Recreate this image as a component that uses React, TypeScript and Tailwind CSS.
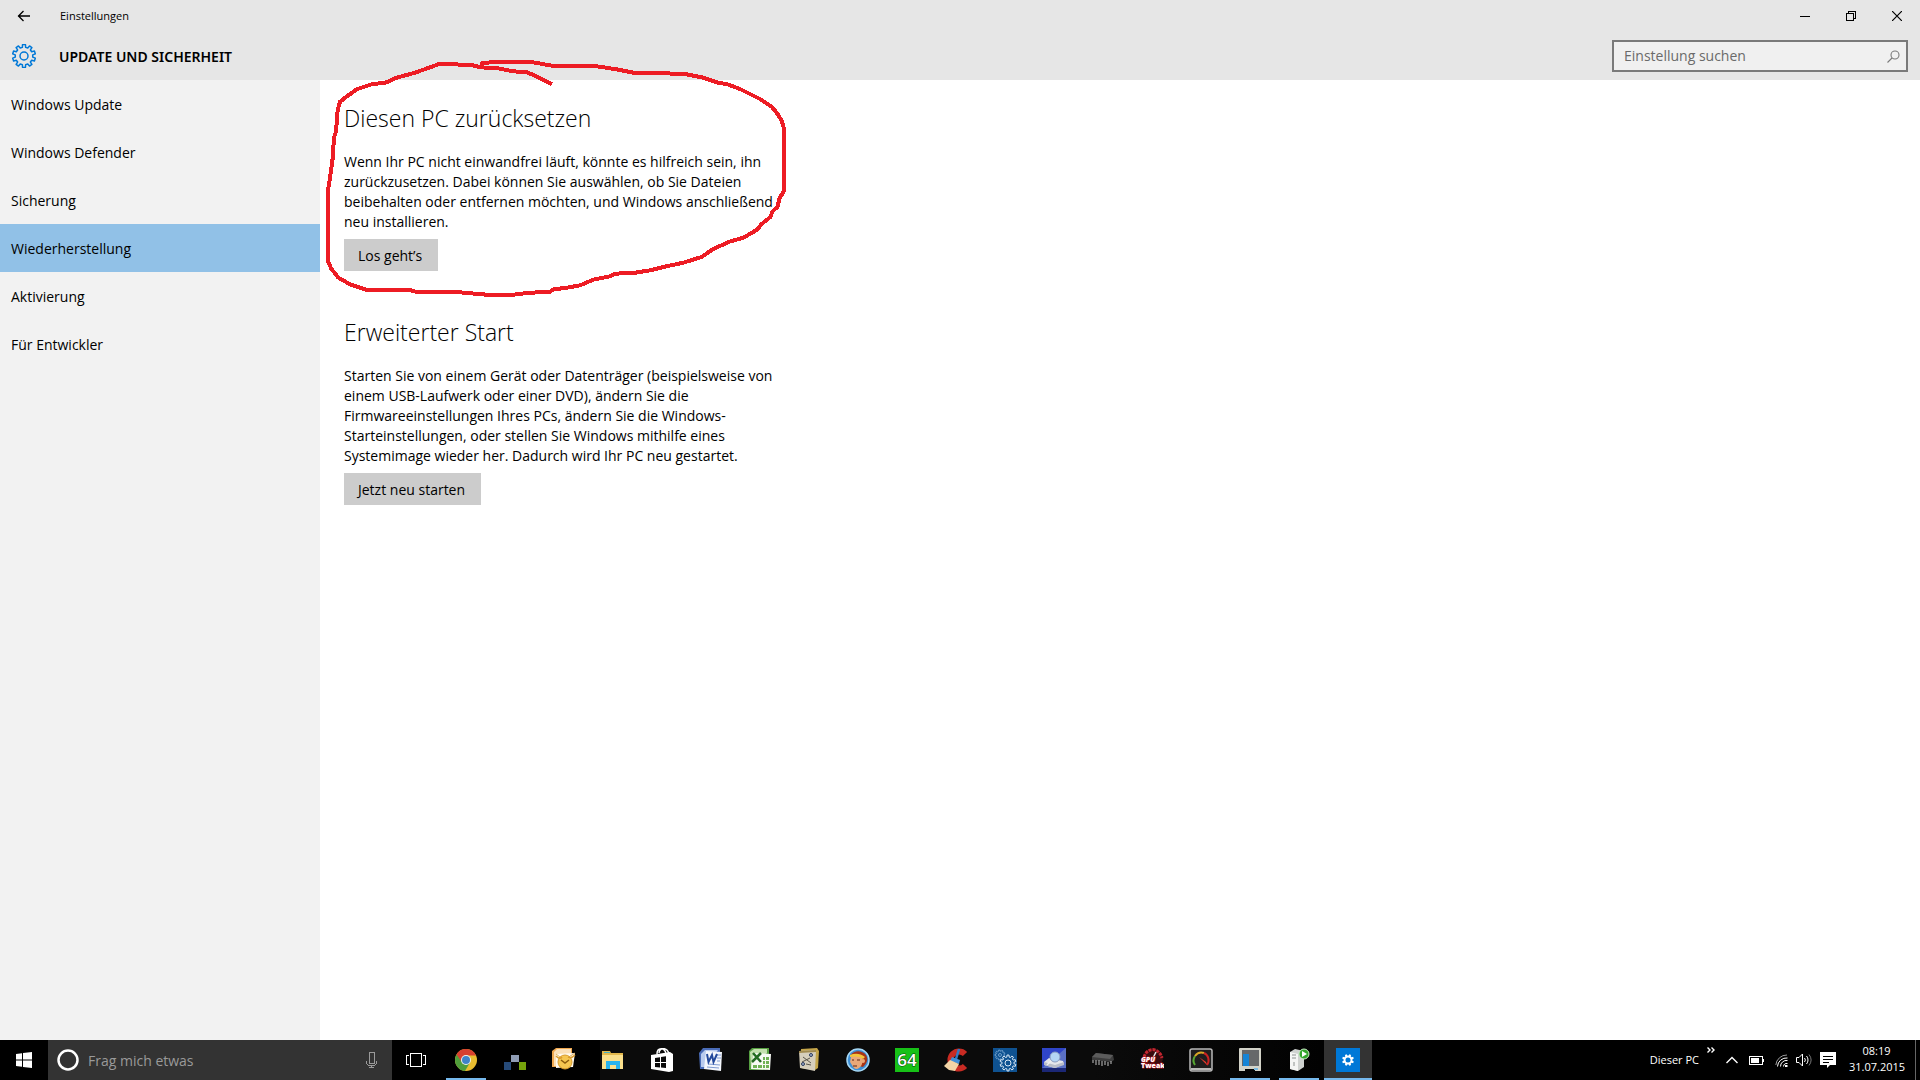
import type { ReactNode } from "react";

const navItems = [
  "Windows Update",
  "Windows Defender",
  "Sicherung",
  "Wiederherstellung",
  "Aktivierung",
  "Für Entwickler",
];

const sections = [
  {
    title: "Diesen PC zurücksetzen",
    lines: [
      "Wenn Ihr PC nicht einwandfrei läuft, könnte es hilfreich sein, ihn",
      "zurückzusetzen. Dabei können Sie auswählen, ob Sie Dateien",
      "beibehalten oder entfernen möchten, und Windows anschließend",
      "neu installieren.",
    ],
    action: "Los geht’s",
  },
  {
    title: "Erweiterter Start",
    lines: [
      "Starten Sie von einem Gerät oder Datenträger (beispielsweise von",
      "einem USB-Laufwerk oder einer DVD), ändern Sie die",
      "Firmwareeinstellungen Ihres PCs, ändern Sie die Windows-",
      "Starteinstellungen, oder stellen Sie Windows mithilfe eines",
      "Systemimage wieder her. Dadurch wird Ihr PC neu gestartet.",
    ],
    action: "Jetzt neu starten",
  },
];

// Outline of a gear with evenly spaced flat teeth
function gearPath(cx: number, cy: number, outer: number, inner: number, teeth: number) {
  const step = (Math.PI * 2) / teeth;
  const points: string[] = [];
  for (let i = 0; i < teeth; i++) {
    const a = i * step + step / 2;
    const corners: [number, number][] = [
      [-0.3, inner],
      [-0.2, outer],
      [0.2, outer],
      [0.3, inner],
    ];
    for (const [offset, r] of corners) {
      const x = cx + Math.cos(a + offset * step) * r;
      const y = cy + Math.sin(a + offset * step) * r;
      points.push(`${x.toFixed(2)} ${y.toFixed(2)}`);
    }
  }
  return `M${points.join("L")}Z`;
}

function Icon({ children }: { children: ReactNode }) {
  return (
    <svg viewBox="0 0 24 24" className="size-6" aria-hidden="true">
      {children}
    </svg>
  );
}

const apps: { name: string; open?: boolean; active?: boolean; icon: ReactNode }[] = [
  {
    name: "Google Chrome",
    open: true,
    icon: (
      <>
        <circle cx="12" cy="12" r="11" fill="#e9bd30" />
        <path d="M12 12 2.5 6.5A11 11 0 0 0 11 23l5-8.5Z" fill="#4f9e3b" />
        <path d="M2.5 6.5A11 11 0 0 1 22 7.500H12L7 13Z" fill="#d8402f" />
        <circle cx="12" cy="12" r="5" fill="#f1f1ec" />
        <circle cx="12" cy="12" r="4" fill="#3f83c9" />
      </>
    ),
  },
  {
    name: "Netzwerk",
    icon: (
      <>
        <path d="M8 7h8v7H8z" fill="#8f9cb4" />
        <path d="M1 14h7v8H1z" fill="#264a78" />
        <path d="M16 14h7v8h-7z" fill="#76a30c" />
      </>
    ),
  },
  {
    name: "Outlook",
    icon: (
      <>
        <path d="M0 3 4 0h16v5l-3 14H0Z" fill="#f0a850" />
        <path d="M2 4 5 1h14v5L4 18H2Z" fill="#fbe0b8" />
        <path d="m4 6 19-1-2 14-17 1Z" fill="#fffaf0" />
        <path d="m4 6 8 6 11-7" fill="none" stroke="#e0b060" strokeWidth="1" />
        <circle cx="13" cy="14" r="7" fill="#f6c650" stroke="#d99a2c" strokeWidth="1" />
        <path d="M4 8q4 4 6 1M16 9q3 2 7-2" fill="none" stroke="#d99a2c" strokeWidth="1.5" />
        <path d="m9 12 4 3 4-3" fill="none" stroke="#8e5d0d" strokeWidth="1.5" />
      </>
    ),
  },
  {
    name: "Explorer",
    icon: (
      <>
        <path d="M1 3h8l1 2h12v16H1z" fill="#e4b94d" />
        <path d="M3 4h6v1H3z" fill="#4bb3c4" />
        <path d="M1 7h21v14H1z" fill="#fbe08c" />
        <path d="M5 13h14v8h-4v-4H9v4H5z" fill="#29b4ee" />
      </>
    ),
  },
  {
    name: "Store",
    icon: (
      <>
        <path d="M7 6c0-7 8-7 9 0M9 5c1-6 8-6 10 1" fill="none" stroke="#fff" strokeWidth="1.5" />
        <path d="m1 7 19-3 3 2v17l-4 1-18-3Z" fill="#fff" />
        <path d="m5 10 5-.7V14H5zM11 9l5-.7V14h-5zM5 15h5v4.500l-5-.5zM11 15h5v5l-5-.5z" fill="#0a0a0a" />
      </>
    ),
  },
  {
    name: "Word",
    icon: (
      <>
        <path d="M0 5 4 0h17v4l-4 17H1Z" fill="#4a6cb8" />
        <path d="M2 6 6 2h13L6 19H2Z" fill="#b9cbee" />
        <path d="m7 3 16 1-1 19-17-2Z" fill="#f4f7fd" />
        <path d="M18 7h4M18 10h4M18 13h3M9 16l12 1M8 19l12 1" stroke="#7f9bd2" strokeWidth="1" />
        <path d="m8 6 1.500 8L13 7l1.500 7L18 6" fill="none" stroke="#23499c" strokeWidth="2" />
      </>
    ),
  },
  {
    name: "Excel",
    icon: (
      <>
        <path d="M1 3 4 0h17v19l-3 3H1Z" fill="#57a142" />
        <path d="M2 4 6 1h13v4L3 20Z" fill="#c3e0ae" />
        <path d="m6 5 17 1-1 16-19-1 1-7Z" fill="#f7faf4" />
        <path d="M15 9h2v3h-2zM18 9h3v3h-3zM15 13h2v3h-2zM18 13h3v3h-3zM5 17h4v3H5zM10 17h4v3h-4zM15 17h2v3h-2zM18 17h3v3h-3z" fill="#6fb255" />
        <path d="m5 5 8 9M13 5l-9 9" stroke="#246b22" strokeWidth="2.5" />
      </>
    ),
  },
  {
    name: "Snipping Tool",
    icon: (
      <>
        <path d="m4 1 16-1 2 3-1 17-3 2L4 20Z" fill="#c4a54a" />
        <path d="m2 3 17-1-1 21-15-3Z" fill="#d6cfbc" />
        <path d="m2 3 17-1v2L2 5Z" fill="#a08a50" />
        <path d="m6 9 8 6M5 14l8-4M9 16l5 1" stroke="#5a564c" strokeWidth="1" />
        <circle cx="14" cy="7" r="1.500" fill="#9fb0cf" stroke="#2c3b5c" strokeWidth="1" />
        <circle cx="6" cy="16" r="1.500" fill="#9fb0cf" stroke="#2c3b5c" strokeWidth="1" />
      </>
    ),
  },
  {
    name: "DAEMON Tools",
    icon: (
      <>
        <circle cx="12" cy="12" r="11" fill="#3d8fd6" stroke="#a6d8f5" strokeWidth="1.5" />
        <path d="M5 7c3-5 11-5 15 0 3 5 0 9-3 12l-4-1-2-6Z" fill="#a83416" />
        <path d="M5 9c3-2 8-2 11 1 1 5 0 9-5 11-3 0-4-2-5-4l-2-3Z" fill="#eaa878" />
        <path d="M4 7c5-2 10-2 15 2l-2 2C13 8 9 8 4 9Z" fill="#f4c63c" />
        <path d="M6 12h2M11 12h3M7 18h4" stroke="#5f2512" strokeWidth="1" />
        <circle cx="17" cy="13" r="2" fill="#eaa878" />
      </>
    ),
  },
  {
    name: "AIDA64",
    icon: (
      <>
        <path d="M0 0h24v24H0z" fill="#17c117" />
        <text x="12" y="18" textAnchor="middle" fontSize="17" fontWeight="600" fill="#fff" stroke="#063f06" strokeWidth="1" paintOrder="stroke">
          64
        </text>
      </>
    ),
  },
  {
    name: "CCleaner",
    icon: (
      <>
        <path d="M21 6A8.500 8.500 0 1 0 21 18" fill="none" stroke="#c92b23" strokeWidth="6" />
        <path d="m15 1-3 10" stroke="#3179c4" strokeWidth="2.5" />
        <path d="m8 9 8 3-1 4-9-3Z" fill="#3f8fd8" />
        <path d="m6 12 9 4-4 7-6-1-5-4Z" fill="#f3d5a6" />
      </>
    ),
  },
  {
    name: "Dienste",
    icon: (
      <>
        <path d="M0 0h24v24H0z" fill="#0f5291" />
        <path d={gearPath(7, 7, 5, 4, 9)} fill="none" stroke="#6f9fcb" strokeWidth="1" />
        <circle cx="7" cy="7" r="1.500" fill="none" stroke="#6f9fcb" />
        <path d={gearPath(15, 15, 8, 6, 10)} fill="#0f5291" stroke="#d9e8f5" strokeWidth="1" />
        <circle cx="15" cy="15" r="3" fill="none" stroke="#d9e8f5" />
      </>
    ),
  },
  {
    name: "Laufwerksanalyse",
    icon: (
      <>
        <path d="M0 0h24v24H0z" fill="#2f45c8" />
        <path d="M24 0v24H0v-4Z" fill="#5a70c4" />
        <path d="M0 20h24v4H0z" fill="#1b2776" />
        <path d="m2 14 5-4 14 3 1 3-9 4-11-3Z" fill="#e4e6ea" />
        <path d="m2 14 11 3v3L2 17ZM13 17l9-3v3l-9 3Z" fill="#b9bdc8" />
        <circle cx="13" cy="9" r="5" fill="#b4d6f4" stroke="#8a9cc0" strokeWidth="1" />
        <path d="m9 13-4 4" stroke="#f0f0f0" strokeWidth="1.5" />
      </>
    ),
  },
  {
    name: "RAM",
    icon: (
      <>
        <path d="m1 9 4-4 17 2 1 5-3 2L1 12Z" fill="#3c3c3c" />
        <path d="m1 9 4-4 17 2-3 4Z" fill="#5c5c5c" />
        <path d="M2 12v3M5 12v5M8 12v5M11 13v5M14 13v4M17 14v4M20 13v3" stroke="#c4c4c4" strokeWidth="1" />
      </>
    ),
  },
  {
    name: "GPU Tweak",
    icon: (
      <>
        <path d="M3 12C3-3 22-3 23 11l-3 9H6Z" fill="#3a0c0f" />
        <path d="M4 9C7-1 19-1 22 10" fill="none" stroke="#c22630" strokeWidth="3" strokeDasharray="3 1" />
        <path d="m12 12 4-8" stroke="#e8e8e8" strokeWidth="1.5" />
        <text x="8" y="14" textAnchor="middle" fontSize="7" fontWeight="800" fontStyle="italic" fill="#fff" stroke="#b3161f" strokeWidth="1" paintOrder="stroke">
          GPU
        </text>
        <text x="13" y="20" textAnchor="middle" fontSize="7" fontWeight="800" fill="#fff" stroke="#b3161f" strokeWidth="1" paintOrder="stroke">
          Tweak
        </text>
      </>
    ),
  },
  {
    name: "Leistungsanzeige",
    icon: (
      <>
        <rect x="1" y="1" width="22" height="22" rx="2" fill="#1e1e1e" stroke="#b9b9b9" strokeWidth="1.5" />
        <path d="M2 20h20v2H2z" fill="#b9b9b9" />
        <path d="M6 17a8 8 0 0 1 0-9" fill="none" stroke="#57a832" strokeWidth="2" />
        <path d="M6 8a8 8 0 0 1 9-3" fill="none" stroke="#d9a625" strokeWidth="2" />
        <path d="M15 5a8 8 0 0 1 3 12" fill="none" stroke="#c92222" strokeWidth="2" />
        <path d="m18 17-8-8 7 5Z" fill="#ee3a2c" />
      </>
    ),
  },
  {
    name: "Systeminfo",
    open: true,
    icon: (
      <>
        <path d="M1 1q0-1 1-1h20q1 0 1 1v22h-6v-2H7v2H1Z" fill="#d2d2c8" />
        <path d="M4 2h17v16H4z" fill="#66686a" />
        <path d="M5 6h6v12H5z" fill="#1584d6" />
        <path d="M16 20h4v2h-4z" fill="#7bb9e0" />
      </>
    ),
  },
  {
    name: "Server",
    open: true,
    icon: (
      <>
        <path d="m3 4 5-3 9 2v16l-6 4-8-2Z" fill="#cfd2d0" />
        <path d="m3 4 8 2v17l-8-2Z" fill="#f4f5f4" />
        <path d="M5 7h4M5 10h4M7 14v4" stroke="#8d9290" strokeWidth="1" />
        <circle cx="17" cy="6" r="5" fill="#34a52c" stroke="#c9ecc4" strokeWidth="1" />
        <path d="m15 3 5 3-5 3Z" fill="#fff" />
      </>
    ),
  },
  {
    name: "Einstellungen",
    open: true,
    active: true,
    icon: (
      <>
        <path d="M0 0h24v24H0z" fill="#0078d7" />
        <path d={gearPath(12, 12, 6, 4.5, 8)} fill="#fff" />
        <circle cx="12" cy="12" r="2.500" fill="#0078d7" />
      </>
    ),
  },
];

function TitleBar() {
  return (
    <div className="flex h-8 items-center justify-between">
      <div className="flex items-center">
        <button aria-label="Zurück" className="flex h-8 w-12 items-center justify-center">
          <svg viewBox="0 0 14 12" className="h-3 w-3.5" fill="none" stroke="#000" strokeWidth="1.3">
            <path d="M13 6H1M6.500 1 1.500 6l5 5" />
          </svg>
        </button>
        <span className="pl-3 text-[11px]">Einstellungen</span>
      </div>
      <div className="flex">
        <button aria-label="Minimieren" className="flex h-8 w-[46px] items-center justify-center">
          <svg viewBox="0 0 10 10" className="size-2.5" shapeRendering="crispEdges">
            <path d="M0 5h10v1H0z" />
          </svg>
        </button>
        <button aria-label="Verkleinern" className="flex h-8 w-[46px] items-center justify-center">
          <svg viewBox="0 0 10 10" className="size-2.5" fill="none" stroke="#000" shapeRendering="crispEdges">
            <path d="M.5 2.500h7v7h-7zM2.500 2V.5h7v7H8" />
          </svg>
        </button>
        <button aria-label="Schließen" className="flex h-8 w-[46px] items-center justify-center">
          <svg viewBox="0 0 10 10" className="size-2.5" stroke="#000" strokeWidth="1.2">
            <path d="m0 0 10 10M10 0 0 10" />
          </svg>
        </button>
      </div>
    </div>
  );
}

function Header() {
  return (
    <header className="bg-[#e6e6e6]">
      <TitleBar />
      <div className="flex h-12 items-center justify-between px-3">
        <div className="flex items-center gap-[23px]">
          <svg viewBox="0 0 24 24" className="size-6" fill="none" stroke="#0078d7" strokeWidth="1.5" strokeLinejoin="round">
            <path d={gearPath(12, 12, 11.5, 8.8, 10)} />
            <circle cx="12" cy="12" r="4" />
          </svg>
          <h1 className="font-['Noto_Sans','Open_Sans',sans-serif] text-[14px] font-semibold">UPDATE UND SICHERHEIT</h1>
        </div>
        <label className="flex h-8 w-[296px] items-center border-2 border-[#7a7a7a] bg-[#f0f0f0] pr-1.5 pl-2.5">
          <input
            type="text"
            aria-label="Einstellung suchen"
            placeholder="Einstellung suchen"
            className="min-w-0 flex-1 bg-transparent text-[14px] leading-5 outline-none placeholder:text-[#6a6a6a]"
          />
          <svg viewBox="0 0 13 13" className="size-[13px]" fill="none" stroke="#7a7a7a" strokeWidth="1.1">
            <circle cx="8" cy="5" r="4" />
            <path d="M5 8 .5 12.500" />
          </svg>
        </label>
      </div>
    </header>
  );
}

function Scribble() {
  return (
    <svg
      viewBox="0 0 1440 780"
      className="pointer-events-none absolute top-[50px] left-[320px] h-[260px] w-[480px]"
      fill="none"
      stroke="#ed1c24"
      strokeWidth="12"
      strokeLinejoin="round"
      strokeLinecap="square"
      shapeRendering="crispEdges"
      aria-hidden="true"
    >
      <path d="M690 100 655 82 622 67 580 64 535 55 482 52 455 45 400 43 360 41 330 52 285 68 230 83 200 97 155 103 110 118 85 136 60 155 53 180 48 245 41 265 40 310 32 370 25 415 23 630 33 655 55 683 90 703 137 719 270 720 290 726 420 727 510 735 575 735 620 729 690 725 700 718 735 714 780 706 820 689 870 679 885 671 940 669 990 661 1030 651 1090 638 1145 621 1175 600 1225 576 1270 563 1310 540 1325 522 1350 502 1358 484 1373 470 1378 445 1391 425 1392 235 1384 210 1370 188 1355 170 1320 147 1260 117 1220 102 1197 99 1150 83 1100 73 1040 70 940 68 890 58 825 48 695 47 640 37 520 36 487 40" />
    </svg>
  );
}

function Taskbar() {
  return (
    <footer className="flex h-10 bg-black text-white">
      <button aria-label="Start" className="flex w-12 items-center justify-center">
        <svg viewBox="0 0 16 16" className="size-4" fill="#fff">
          <path d="m0 2 6-.8v6.300H0zM7 1l9-1v7.500H7zM0 8.500h6v6.300L0 14zM7 8.500h9V16l-9-1z" />
        </svg>
      </button>
      <label className="flex w-[344px] items-center bg-[#333] pr-[15px] pl-2">
        <svg viewBox="0 0 24 24" className="size-6" fill="none">
          <circle cx="12" cy="12" r="9.500" stroke="#fff" strokeWidth="2.5" />
        </svg>
        <input
          type="text"
          aria-label="Frag mich etwas"
          placeholder="Frag mich etwas"
          className="ml-2 min-w-0 flex-1 bg-transparent text-[14px] outline-none placeholder:text-[#9a9a9a]"
        />
        <svg viewBox="0 0 11 16" className="h-4 w-[11px]" fill="none" stroke="#9a9a9a" shapeRendering="crispEdges">
          <path d="M3.500.5h5v11h-5zM.5 8.500v3l2 2h6l2-2v-3M5.500 13.500v2M3 15.500h5" />
        </svg>
      </label>
      <button aria-label="Taskansicht" className="flex w-12 items-center justify-center">
        <svg viewBox="0 0 20 14" className="h-3.5 w-5" fill="none" stroke="#fff" shapeRendering="crispEdges">
          <path d="M4.500.5h11v13h-11zM3 2.500H.5v9H3M17 2.500h2.500v9H17" />
        </svg>
      </button>

      <nav aria-label="Programme" className="ml-0.5 flex gap-px bg-[linear-gradient(90deg,#000_158px,#0b0b0b_158px,#0b0b0b_70%,#000)]">
        {apps.map((app) => (
          <button
            key={app.name}
            aria-label={app.name}
            className={`relative flex w-12 items-center justify-center ${app.active ? "bg-[#333]" : ""}`}
          >
            <Icon>{app.icon}</Icon>
            {app.open && (
              <span className={`absolute bottom-0 h-0.5 bg-[#76b9ed] ${app.active ? "inset-x-0" : "inset-x-1"}`} />
            )}
          </button>
        ))}
      </nav>

      <div className="ml-auto flex items-center">
        <span className="text-[11px]">Dieser PC</span>
        <button aria-label="Weitere Elemente" className="mb-5 ml-2">
          <svg viewBox="0 0 8 6" className="h-1.5 w-2" fill="none" stroke="#fff" strokeWidth="1.4">
            <path d="m.5.5 2.500 2.500L.5 5.500M4.500.5 7 3 4.500 5.500" />
          </svg>
        </button>
        <button aria-label="Ausgeblendete Symbole" className="ml-[11px]">
          <svg viewBox="0 0 12 8" className="h-2 w-3" fill="none" stroke="#fff" strokeWidth="1.4">
            <path d="m.5 7 5.500-5.500L11.500 7" />
          </svg>
        </button>
        <button aria-label="Akku" className="ml-[11px]">
          <svg viewBox="0 0 15 9" className="h-[9px] w-[15px]" fill="none" stroke="#fff" shapeRendering="crispEdges">
            <path d="M.5.5h13v8H.5zM14.500 3v3" />
            <path d="M2 2h8v5H2z" fill="#fff" stroke="none" />
          </svg>
        </button>
        <button aria-label="WLAN" className="ml-[11px]">
          <svg viewBox="0 0 13 13" className="size-[13px]" fill="none" stroke="#fff">
            <path d="M.8 11A11 11 0 0 1 12 1" stroke="#999" />
            <path d="M2.500 12.500A9 9 0 0 1 12.500 4M5.500 12.500a6 6 0 0 1 7-6M8.500 12.500A3.500 3.500 0 0 1 12.500 9.500" />
            <path d="M10 11h2.500v2H10z" fill="#fff" stroke="none" />
          </svg>
        </button>
        <button aria-label="Lautsprecher" className="ml-2">
          <svg viewBox="0 0 16 14" className="h-3.5 w-4" fill="none" stroke="#fff">
            <path d="M.5 4.500h2.500l3.500-3.500v12L3 9.500H.5zM8.500 5a3 3 0 0 1 0 4M10.500 3a6 6 0 0 1 0 8" />
            <path d="M13 1.500a9 9 0 0 1 0 11" stroke="#777" />
          </svg>
        </button>
        <button aria-label="Info-Center" className="ml-2">
          <svg viewBox="0 0 16 16" className="size-4">
            <path d="M0 0h16v13h-6l-3 3v-3H0z" fill="#fff" />
            <path d="M3 4.500h10M3 7.500h10M3 10.500h6" stroke="#000" />
          </svg>
        </button>
        <button className="ml-[13px] w-[55px] pb-0.5 text-center text-[11px] leading-4 whitespace-nowrap">
          <span className="block">08:19</span>
          <span className="block">31.07.2015</span>
        </button>
        <button aria-label="Desktop anzeigen" className="ml-[11px] h-10 w-[5px] border-l border-[#666]" />
      </div>
    </footer>
  );
}

export default function App() {
  return (
    <div className="relative flex min-h-screen flex-col bg-white font-['Open_Sans','Noto_Sans',sans-serif] text-black">
      <Header />
      <div className="flex flex-1">
        <nav aria-label="Update und Sicherheit" className="w-80 shrink-0 bg-[#f2f2f2]">
          {navItems.map((item) => (
            <a
              key={item}
              href="#"
              className={`flex h-12 items-center pl-[11px] text-[14px] ${item === "Wiederherstellung" ? "bg-[#91c1e7]" : ""}`}
            >
              {item}
            </a>
          ))}
        </nav>
        <main className="flex flex-col gap-[47px] px-6 pt-6">
          {sections.map((section) => (
            <section key={section.title}>
              <h2 className="text-[23px] leading-7 font-light">{section.title}</h2>
              <p className="mt-5 text-[14px] leading-5">
                {section.lines.map((line) => (
                  <span key={line} className="block">
                    {line}
                  </span>
                ))}
              </p>
              <button className="mt-[7px] h-8 bg-[#ccc] pr-4 pl-3.5 text-[14px]">{section.action}</button>
            </section>
          ))}
        </main>
      </div>
      <Taskbar />
      <Scribble />
    </div>
  );
}
